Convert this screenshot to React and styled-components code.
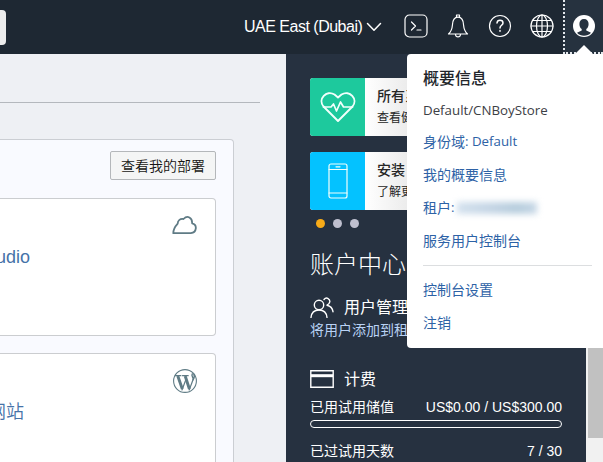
import React from "react";
import styled, { createGlobalStyle } from "styled-components";

const GlobalStyle = createGlobalStyle`
  * { box-sizing: border-box; }
  body {
    margin: 0;
    overflow: hidden;
    font-family: "Liberation Sans", "Noto Sans CJK SC", sans-serif;
    font-size: 14px;
  }
`;

const Page = styled.div`
  position: relative;
  display: flex;
  flex-direction: column;
  width: 603px;
  height: 462px;
  overflow: hidden;
  background: #eef0f4;
`;

const Header = styled.header`
  display: flex;
  align-items: center;
  flex: 0 0 54px;
  background: #1e2833;
  color: #fff;
`;

const SearchEdge = styled.div`
  width: 6px;
  height: 35px;
  border-radius: 0 4px 4px 0;
  background: #ececec;
`;

const Region = styled.div`
  display: flex;
  align-items: center;
  gap: 4px;
  width: 138px;
  margin-left: auto;
  font-size: 16px;
  letter-spacing: -0.5px;
  white-space: nowrap;
  svg { flex: none; }
`;

const HeaderIcons = styled.nav`
  display: flex;
  align-items: center;
  gap: 18px;
  padding: 0 9px 2px 22px;
  svg { display: block; }
`;

const ProfileButton = styled.button`
  display: flex;
  align-items: center;
  justify-content: center;
  position: relative;
  width: 40px;
  height: 54px;
  padding: 0;
  border: 0 dotted #e4e8ec;
  border-width: 0 0 2px 2px;
  background: #26323f;
  svg { display: block; }
`;

const Pointer = styled.span`
  position: absolute;
  left: 10px;
  bottom: -2px;
  border: 9px solid transparent;
  border-top: 0;
  border-bottom-color: #fff;
`;

const Body = styled.div`
  display: flex;
  flex: 1;
  min-height: 0;
`;

const Main = styled.main`
  width: 286px;
  overflow: hidden;
`;

const Divider = styled.div`
  width: 260px;
  height: 49px;
  border-bottom: 1px solid #b4b8bd;
`;

const Panel = styled.section`
  width: 234px;
  height: 360px;
  margin-top: 36px;
  padding: 11px 17px 0 0;
  border: 1px solid #cbced3;
  border-left: 0;
  border-radius: 0 4px 0 0;
  background: #f9faff;
`;

const DeployButton = styled.button`
  display: block;
  width: 106px;
  height: 29px;
  margin: 0 0 18px auto;
  padding: 0 0 2px;
  border: 1px solid #b4b7ba;
  border-radius: 2px;
  background: #f4f5f5;
  color: #161513;
  font: 350 14px "Liberation Sans", "Noto Sans CJK SC", sans-serif;
`;

const Card = styled.article`
  height: 138px;
  margin-bottom: 17px;
  padding: ${({ $top }) => $top}px 18px 0 0;
  border: 1px solid #cbcdd0;
  border-left: 0;
  border-radius: 0 4px 4px 0;
  background: #fff;
  svg { display: block; margin-left: auto; color: #5f7b85; }
`;

const CardTitle = styled.h3`
  margin: ${({ $top }) => $top}px 0 0 ${({ $shift }) => $shift}px;
  color: #4672a8;
  font-size: 18px;
  font-weight: 350;
  line-height: 24px;
`;

const Sidebar = styled.aside`
  width: 300px;
  padding: 24px 24px 0;
  background: #263140;
  color: #fff;
`;

const Promo = styled.div`
  display: flex;
  height: 58px;
  margin-bottom: 16px;
  border-radius: 3px;
  overflow: hidden;
  background: linear-gradient(90deg, #fff 55px, #e6e6e6 110px);
  color: #262626;
`;

const PromoArt = styled.div`
  display: flex;
  align-items: center;
  justify-content: center;
  width: 55px;
  background: ${({ $color }) => $color};
  color: #f2fffc;
`;

const PromoText = styled.div`
  padding: 8px 0 0 12px;
  font-size: 12px;
  line-height: 24px;
  strong { display: block; font-size: 14px; line-height: 20px; font-weight: 500; }
`;

const Dots = styled.div`
  display: flex;
  gap: 8px;
  margin: -7px 0 0 6px;
`;

const Dot = styled.span`
  width: 9px;
  height: 9px;
  border-radius: 50%;
  background: ${({ $active }) => ($active ? "#f8ab18" : "#bfc0cf")};
`;

const SidebarTitle = styled.h2`
  height: 36px;
  margin: 19px 0 12px;
  font-size: 24px;
  font-weight: 300;
  line-height: 36px;
`;

const SectionTitle = styled.h3`
  display: flex;
  align-items: center;
  gap: 10px;
  height: 24px;
  margin: 0;
  font-size: 16px;
  font-weight: 400;
`;

const TitleText = styled.span`
  padding-bottom: 2px;
`;

const Note = styled.p`
  height: 20px;
  margin: 0 0 28px;
  color: #b9d2f5;
  line-height: 22px;
`;

const Usage = styled.div`
  display: flex;
  justify-content: space-between;
  height: 20px;
  margin-top: 6px;
  line-height: 20px;
`;

const Meter = styled.div`
  height: 8px;
  margin: 3px 0 13px;
  border: 1px solid #fff;
  border-radius: 4px;
`;

const Scrollbar = styled.div`
  width: 17px;
  padding-left: 2px;
  background: #f1f1f1;
`;

const ScrollThumb = styled.div`
  width: 15px;
  height: 384px;
  background: #c1c1c1;
`;

const ProfileMenu = styled.div`
  position: absolute;
  left: 407px;
  top: 54px;
  display: flex;
  flex-direction: column;
  width: 196px;
  height: 294px;
  padding: 8px 12px 0 16px;
  border-radius: 4px 0 0 4px;
  background: #fff;
  font-family: "Open Sans", "Noto Sans CJK SC", sans-serif;
  font-size: 14px;
`;

const MenuHeading = styled.h2`
  height: 31px;
  margin: 0;
  color: #22262b;
  font-size: 16px;
  font-weight: 500;
  line-height: 32px;
`;

const MenuItem = styled.div`
  display: flex;
  align-items: center;
  height: ${({ $plain }) => ($plain ? 32 : 33)}px;
  padding: ${({ $plain }) => ($plain ? "2px 0 0" : "0 0 2px")};
  color: ${({ $plain }) => ($plain ? "#3c4045" : "#2d62a6")};
  white-space: pre;
`;

const Latin = styled.span`
  font-size: 13.3px;
`;

const Redacted = styled.span`
  width: 80px;
  height: 12px;
  margin: 2px 0 0 2px;
  background: linear-gradient(90deg, #d3e1ee, #c3d4e4 45%, #b6cddd 75%, #c6d7e6);
  filter: blur(3px);
`;

const MenuRule = styled.div`
  flex: 0 0 1px;
  width: 169px;
  margin: 8px 0 7px;
  background: #dcdee0;
`;

const Line = ({ w, h, children, sw = 1.5 }) => (
  <svg width={w} height={h} viewBox={`0 0 ${w} ${h}`} fill="none" stroke="currentColor" strokeWidth={sw} strokeLinejoin="round" strokeLinecap="round">
    {children}
  </svg>
);

export default function App() {
  return (
    <Page>
      <GlobalStyle />
      <Header>
        <SearchEdge />
        <Region>
          UAE East (Dubai)
          <Line w={16} h={10}><path d="M1.5 1.5 8 8.2l6.5-6.7" /></Line>
        </Region>
        <HeaderIcons>
          <Line w={24} h={24} sw={1.2}>
            <rect x="1" y="1" width="22" height="22" rx="4.5" />
            <path d="m7.5 8 4 4-4 4M13 16h4" />
          </Line>
          <Line w={24} h={24} sw={1.2}>
            <path d="M2.500 20h19c-2.600-2.300-3.600-4.400-3.900-8.700C17.400 6 15.500 3.200 12 3.200S6.600 6 6.400 11.300C6.100 15.600 5.100 17.700 2.500 20ZM10.500 3V1h3v2M9.500 20.500c.3 3.200 4.700 3.200 5 0" />
          </Line>
          <Line w={24} h={24} sw={1.2}>
            <circle cx="12" cy="12" r="10.5" />
            <path d="M9 9c.2-2 1.400-2.700 3-2.700s3 1 3 2.700c0 2.200-3 2.300-3 4.900M12 16.500v.8" strokeWidth="1.5" />
          </Line>
          <Line w={24} h={24} sw={1.2}>
            <circle cx="12" cy="12" r="11" />
            <ellipse cx="12" cy="12" rx="5.500" ry="11" />
            <path d="M12 1v22M1 12h22M3 6.500h18M3 17.500h18" />
          </Line>
        </HeaderIcons>
        <ProfileButton>
          <svg width="22" height="22" viewBox="0 0 22 22">
            <circle cx="11" cy="11" r="11" fill="#fff" />
            <path d="M11 4c-3 0-4.600 2.100-4.600 5 0 2.200.8 4 2.300 5.100v1.400L4 17.800C6 20 8.300 20.800 11 20.800s5-.8 7-3l-4.700-2.300v-1.400c1.500-1.100 2.300-2.900 2.300-5.100 0-2.900-1.600-5-4.600-5Z" fill="#26323f" />
          </svg>
          <Pointer />
        </ProfileButton>
      </Header>

      <Body>
        <Main>
          <Divider />
          <Panel>
            <DeployButton>查看我的部署</DeployButton>
            <Card $top={16}>
              <Line w={25} h={20} sw={1.8}>
                <path d="M1.300 18.200h17.500c6.300-.6 6.600-8.800 1.300-9.900C20.400 2.500 15.400-.1 11.500 4c-3.200-.6-5.800 1.300-5.800 4.600-2.400 2.600-4.400 5.800-4.400 9.600Z" />
              </Line>
              <CardTitle $top={10} $shift={-4}>udio</CardTitle>
            </Card>
            <Card $top={15}>
              <Line w={24} h={24} sw={1.1}>
                <circle cx="12" cy="12" r="11.400" />
                <path d="m4.800 7 4.500 13M12.200 7l4.200 13" strokeWidth="2.900" strokeLinecap="butt" />
                <path d="m9 21 4.300-11.500M16.200 21l3.900-10.500M2.300 6.700h5.600M9.500 6.700h5.700" strokeWidth="1.200" />
                <path d="M19.300 4.800c-1.500 2.500 1.600 3.300.7 6 1.200-1.900 1.800-4 .9-5.500" strokeWidth="1.400" />
              </Line>
              <CardTitle $top={7} $shift={-12}>网站</CardTitle>
            </Card>
          </Panel>
        </Main>

        <Sidebar>
          <Promo>
            <PromoArt $color="#1dc99d">
              <Line w={36} h={30} sw={1.900}>
                <path d="M18 29 3.500 14.500C-2.500 7 6.500-2.500 14.500 2.500L18 5.500l3.500-3c8-5 17 4.500 11 12L18 29Z" />
                <path d="M3.500 15H11l2.500-3 3 7 4-9 3 5h9" strokeWidth="1.700" />
              </Line>
            </PromoArt>
            <PromoText><strong>所有系</strong>查看健</PromoText>
          </Promo>
          <Promo>
            <PromoArt $color="#04c2ff">
              <Line w={20} h={36} sw={1.200}>
                <rect x="1" y="1" width="18" height="34" rx="2" />
                <path d="M1 6.500h18M1 30h18M8 3.800h4" />
              </Line>
            </PromoArt>
            <PromoText><strong>安装</strong>了解更</PromoText>
          </Promo>
          <Dots><Dot $active /><Dot /><Dot /></Dots>
          <SidebarTitle>账户中心</SidebarTitle>
          <SectionTitle>
            <Line w={24} h={22} sw={1.400}>
              <circle cx="9" cy="9" r="4.700" />
              <path d="M1 21.500c.5-5 3.500-7.500 8-7.500s7.500 2.500 8 7.500M14 3.500c2.500-3 6.500-.5 5.700 2.700-.4 1.600-1.400 2.400-2.700 3 3.800.8 5.500 3 6 6.500" />
            </Line>
            <TitleText>用户管理</TitleText>
          </SectionTitle>
          <Note>将用户添加到租</Note>
          <SectionTitle>
            <Line w={24} h={18} sw={1.400}>
              <path d="M.8.800h22.400v16.400H.8Z" strokeLinejoin="miter" />
              <path d="M1 5.700h22" strokeWidth="3" strokeLinecap="butt" />
            </Line>
            <TitleText>计费</TitleText>
          </SectionTitle>
          <Usage><span>已用试用储值</span><span>US$0.00 / US$300.00</span></Usage>
          <Meter />
          <Usage><span>已过试用天数</span><span>7 / 30</span></Usage>
        </Sidebar>
        <Scrollbar><ScrollThumb /></Scrollbar>
      </Body>

      <ProfileMenu>
        <MenuHeading>概要信息</MenuHeading>
        <MenuItem $plain><Latin>Default/CNBoyStore</Latin></MenuItem>
        <MenuItem>身份域<Latin>: Default</Latin></MenuItem>
        <MenuItem>我的概要信息</MenuItem>
        <MenuItem>租户<Latin>:</Latin><Redacted /></MenuItem>
        <MenuItem>服务用户控制台</MenuItem>
        <MenuRule />
        <MenuItem>控制台设置</MenuItem>
        <MenuItem>注销</MenuItem>
      </ProfileMenu>
    </Page>
  );
}
